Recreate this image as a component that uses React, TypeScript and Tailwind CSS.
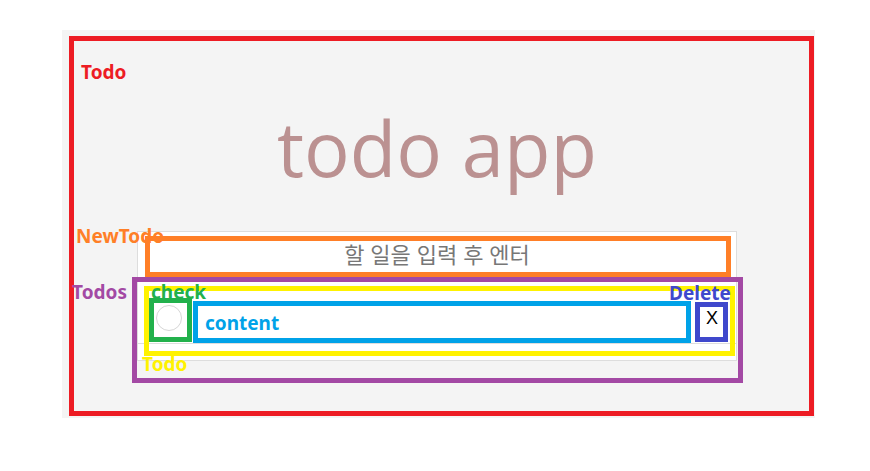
export default function App() {
  return (
    <div className="relative h-[471px] w-[870px] overflow-hidden bg-white pl-[62px] pt-[30px] font-['Noto_Sans',sans-serif]">
      {/* the app as rendered */}
      <div className="h-[388px] w-[753px] bg-[#f4f4f4] pt-[80px]">
        <h1 className="ml-[75px] w-[600px] text-center font-['Open_Sans',sans-serif] text-[76px] font-normal leading-[76px] text-[#bb9191]">
          todo app
        </h1>
        <div className="ml-[75px] mt-[45px] w-[600px] border border-[#ddd] bg-white">
          <input
            className="block h-[46px] w-full bg-white pb-[5px] text-center font-['Noto_Sans_CJK_KR',sans-serif] text-[22px] outline-none placeholder:text-[#777] placeholder:[word-spacing:1px]"
            placeholder="할 일을 입력 후 엔터"
          />
          <ul className="bg-white pt-[14px]">
            <li className="flex h-[52px] items-center border-b border-[#ddd]">
              <span className="ml-[18px] h-[26px] w-[26px] rounded-full border border-[#d6d6d6]" />
              <span className="flex-1" />
              <button className="mr-[12px] w-[24px] text-center font-['Liberation_Sans',sans-serif] text-[18px] leading-none text-black">
                X
              </button>
            </li>
          </ul>
          <div className="h-[16px] bg-white" />
        </div>
      </div>

      {/* annotation boxes */}
      <div className="absolute left-[69px] top-[36px] h-[380px] w-[745px] border-[5px] border-[#ed1c24]" />
      <div className="absolute left-[145px] top-[236px] h-[41px] w-[586px] border-[5px] border-[#ff7f27]" />
      <div className="absolute left-[132px] top-[277px] h-[106px] w-[611px] border-[5px] border-[#a349a4]" />
      <div className="absolute left-[144px] top-[286px] h-[70px] w-[591px] border-[5px] border-[#fff200]" />
      <div className="absolute left-[149px] top-[298px] h-[44px] w-[43px] border-[5px] border-[#22b14c]" />
      <div className="absolute left-[193px] top-[301px] h-[42px] w-[498px] border-[5px] border-[#00a2e8]" />
      <div className="absolute left-[695px] top-[302px] h-[40px] w-[33px] border-[5px] border-[#3f48cc]" />

      {/* annotation labels */}
      <span className="absolute left-[81px] top-[63px] text-[19px] font-bold leading-[19px] text-[#ed1c24]">Todo</span>
      <span className="absolute left-[76px] top-[227px] text-[19px] font-bold leading-[19px] text-[#ff7f27]">NewTodo</span>
      <span className="absolute left-[72px] top-[283px] text-[19px] font-bold leading-[19px] text-[#a349a4]">Todos</span>
      <span className="absolute left-[151px] top-[283px] text-[19px] font-bold leading-[19px] text-[#22b14c]">check</span>
      <span className="absolute left-[205px] top-[314px] text-[19px] font-bold leading-[19px] text-[#00a2e8]">content</span>
      <span className="absolute left-[669px] top-[284px] text-[19px] font-bold leading-[19px] text-[#3f48cc]">Delete</span>
      <span className="absolute left-[142px] top-[355px] text-[19px] font-bold leading-[19px] text-[#fff200]">Todo</span>
    </div>
  );
}
